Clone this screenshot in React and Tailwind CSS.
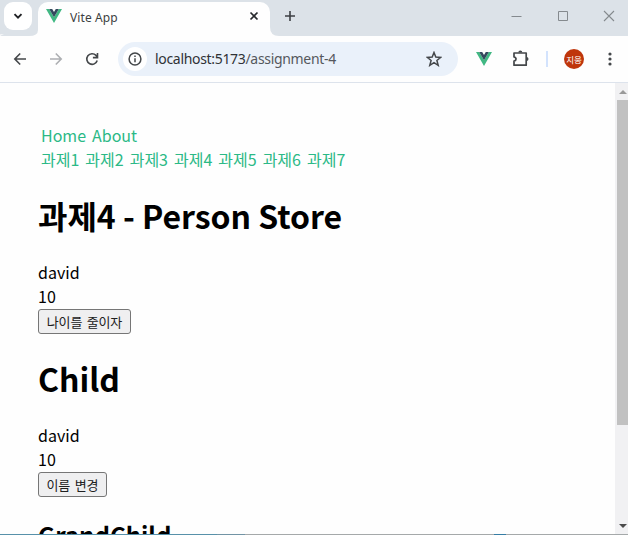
import React from 'react';

const VueLogo = ({ className }) => (
  <svg className={className} viewBox="0 0 16 14" preserveAspectRatio="none">
    <path d="M0 0h3.2L8 8.3 12.8 0H16L8 14z" fill="#41b883" />
    <path d="M3.2 0h3L8 3.1 9.8 0h3L8 8.3z" fill="#34495e" />
  </svg>
);

const Icon = ({ children, size = 16, className = '', color = '#44474a', width = 1.6 }) => (
  <svg width={size} height={size} viewBox={`0 0 ${size} ${size}`} className={`shrink-0 ${className}`} fill="none" stroke={color} strokeWidth={width}>
    {children}
  </svg>
);

function TabStrip() {
  return (
    <div className="flex h-9 shrink-0 bg-[#dce2e8]">
      <div className="flex w-[38px] shrink-0 flex-col justify-between">
        <div className="ml-1 mt-[2px] flex h-7 w-7 items-center justify-center rounded-[9px] bg-white">
          <Icon size={10} color="#1f2124" width={1.9}><path d="M1.5 3.2 5 6.7l3.5-3.5" /></Icon>
        </div>
        <svg width="38" height="6" className="block"><path d="M38 0v6H29Q38 6 38 0zM0 4.500Q2 4 4 4.500Q1.500 4.500 0 6z" fill="#fefefe" /></svg>
      </div>
      <div className="mt-[2px] flex h-[34px] w-[232px] shrink-0 items-start rounded-t-[10px] bg-[#fefefe]">
        <VueLogo className="ml-2 mt-[7px] h-[14px] w-4 shrink-0" />
        <span className="ml-2 mt-2 flex-1 whitespace-nowrap text-[12px] leading-4 tracking-[0.1px] text-[#3c3e41]">Vite App</span>
        <Icon size={10} className="mr-[11px] mt-[9px]" color="#27292c" width={1.7}><path d="M1.5 1.5l7 7M8.5 1.5l-7 7" /></Icon>
      </div>
      <svg width="9" height="9" className="shrink-0 self-end"><path d="M0 0v9h9Q0 9 0 0z" fill="#fefefe" /></svg>
      <Icon size={12} className="ml-[5px] mt-[10px]" color="#3c3f43" width={1.6}><path d="M6 1v10M1 6h10" /></Icon>
      <div className="flex flex-1 justify-end gap-[35px] pr-[13px] pt-[10px]">
        <Icon size={11} color="#858a8e" width={1}><path d="M.5 6.5h10" /></Icon>
        <Icon size={11} color="#858a8e" width={1}><path d="M1.5 1.5h9v9h-9z" /></Icon>
        <Icon size={12} color="#858a8e" width={1.1}><path d="M1 1l10 10M11 1 1 11" /></Icon>
      </div>
    </div>
  );
}

function Toolbar() {
  return (
    <div className="flex h-[47px] shrink-0 items-center border-b border-[#dde3ec] bg-[#fefefe]">
      <Icon size={14} className="ml-[13px]"><path d="M13 7H2M7.2 1.5 1.8 7l5.4 5.5" /></Icon>
      <Icon size={14} className="ml-[22px]" color="#adafb2"><path d="M1 7h11M6.8 1.5 12.2 7l-5.4 5.5" /></Icon>
      <Icon size={14} className="ml-[22px]"><path d="M12.2 8.5A5.3 5.3 0 1 1 11 3.4L12.3 5M12.5 1v4.6H7.9" /></Icon>
      <div className="ml-[19px] flex h-[34px] w-[340px] shrink-0 items-center rounded-full bg-[#eaf1fa]">
        <span className="ml-[5px] flex h-6 w-6 shrink-0 items-center justify-center rounded-full bg-white">
          <Icon size={14} width={1.5}><circle cx="7" cy="7" r="5.9" /><path d="M7 6.2v4M7 3.6v1.5" /></Icon>
        </span>
        <span className="ml-2 flex-1 whitespace-nowrap text-[14px] leading-5 tracking-[-0.32px] text-[#303236]">
          localhost:5173<span className="text-[#55585d]">/assignment-4</span>
        </span>
        <Icon size={16} className="mr-4" width={1.5}><path d="M8 1.5l1.8 4.6 4.9.3-3.8 3.1 1.3 4.8L8 11.6l-4.2 2.7 1.3-4.8-3.8-3.1 4.9-.3z" /></Icon>
      </div>
      <VueLogo className="ml-[18px] h-[14px] w-4 shrink-0" />
      <Icon size={18} className="ml-5" width={1.7}>
        <path d="M2 3h12.2v12.2H2v-4C4.7 10.7 4.7 7.400 2 7z" strokeLinejoin="round" />
        <path d="M6.300 2.500a2 2 0 0 1 4 0zM14.500 7a2 2 0 0 1 0 4z" fill="#44474a" stroke="none" />
      </Icon>
      <span className="ml-4 h-4 w-[2px] shrink-0 bg-[#d3e3fd]" />
      <span className="ml-4 flex h-5 w-5 shrink-0 items-center justify-center whitespace-nowrap rounded-full bg-[#bf360c] font-['Noto_Sans_CJK_KR',sans-serif] text-[8.5px] leading-none text-white">지웅</span>
      <svg width="4" height="14" className="ml-6 shrink-0" fill="#44474a"><circle cx="2" cy="2" r="1.600" /><circle cx="2" cy="7" r="1.600" /><circle cx="2" cy="12" r="1.600" /></svg>
    </div>
  );
}

const Button = ({ className, children }) => (
  <button className={`mt-px block h-[25px] whitespace-nowrap rounded-[3px] border border-[#767676] bg-[#efeff0] text-center text-[13px] leading-[22px] tracking-[-0.2px] [word-spacing:2px] text-[#202020] ${className}`}>{children}</button>
);

export default function App() {
  return (
    <div className="flex h-[535px] w-[628px] flex-col overflow-hidden bg-[#fefefe] font-['Noto_Sans','Noto_Sans_CJK_KR',sans-serif]">
      <TabStrip />
      <Toolbar />
      <div className="flex min-h-0 flex-1">
        <main className="min-w-0 flex-1 overflow-hidden pl-[38px] pt-10 font-['Noto_Sans_CJK_KR',sans-serif] text-[16px] leading-6 text-black">
          <nav className="pl-[3px] text-[#2bb986]">
            <div className="flex gap-[6px]"><a>Home</a><a>About</a></div>
            <div className="flex gap-[6px]">
              <a>과제1</a><a>과제2</a><a>과제3</a><a>과제4</a><a>과제5</a><a>과제6</a><a>과제7</a>
            </div>
          </nav>
          <h1 className="mt-[21px] h-[68px] whitespace-nowrap text-[32px] font-bold leading-[47px] tracking-[-0.03px]">과제4 - Person Store</h1>
          <div>david</div>
          <div>10</div>
          <Button className="w-[93px]">나이를 줄이자</Button>
          <h1 className="mt-[21px] h-[68px] text-[32px] font-bold leading-[47px]">Child</h1>
          <div>david</div>
          <div>10</div>
          <Button className="w-[69px]">이름 변경</Button>
          <h2 className="mt-5 text-[24px] font-bold leading-[35px]">GrandChild</h2>
        </main>
        <div className="flex w-[13px] shrink-0 flex-col items-end bg-[#f1f1f3]">
          <svg width="11" height="17" className="shrink-0"><path d="M2 11l4-4 4 4z" fill="#999" /></svg>
          <div className="h-[325px] w-[11px] shrink-0 bg-[#c1c1c1]" />
          <div className="flex-1" />
          <svg width="11" height="17" className="shrink-0"><path d="M2 7h8l-4 4z" fill="#4b4b4b" /></svg>
        </div>
      </div>
      <div className="flex h-px shrink-0 bg-[#a5a9aa]"><div className="w-[217px] bg-[#5791aa]" /><div className="w-[28px] bg-[#7294a5]" /><div className="ml-[249px] w-[12px] bg-[#367da5]" /></div>
    </div>
  );
}
